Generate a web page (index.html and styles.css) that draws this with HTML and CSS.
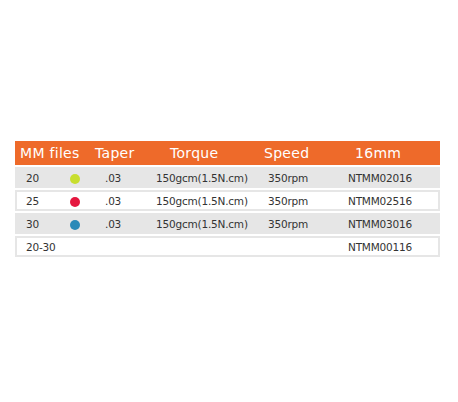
FILE: index.html
```html
<!DOCTYPE html>
<html lang="en">

<head>
    <meta charset="UTF-8">
    <meta name="viewport" content="width=device-width, initial-scale=1.0">
    <title>MM files</title>
    <link rel="stylesheet" href="styles.css">
</head>

<body>
    <main class="spec">
        <div class="spec-head">
            <span>MM files</span>
            <span>Taper</span>
            <span>Torque</span>
            <span>Speed</span>
            <span>16mm</span>
        </div>

        <div class="spec-row shaded">
            <span>20</span>
            <span><i class="dot lime"></i></span>
            <span>.03</span>
            <span>150gcm(1.5N.cm)</span>
            <span>350rpm</span>
            <span>NTMM02016</span>
        </div>
        <div class="spec-row">
            <span>25</span>
            <span><i class="dot red"></i></span>
            <span>.03</span>
            <span>150gcm(1.5N.cm)</span>
            <span>350rpm</span>
            <span>NTMM02516</span>
        </div>
        <div class="spec-row shaded">
            <span>30</span>
            <span><i class="dot blue"></i></span>
            <span>.03</span>
            <span>150gcm(1.5N.cm)</span>
            <span>350rpm</span>
            <span>NTMM03016</span>
        </div>
        <div class="spec-row">
            <span>20-30</span>
            <span></span>
            <span></span>
            <span></span>
            <span></span>
            <span>NTMM00116</span>
        </div>
    </main>
</body>

</html>
```

FILE: styles.css
```css
body {
    margin: 0;
    padding: 0;
    background: #ffffff;
    font-family: 'DejaVu Sans', sans-serif;
    color: #333333;
}

.spec {
    width: 425px;
    margin: 141px 0 0 15px;
    display: flex;
    flex-direction: column;
    gap: 2px;
}

.spec-head {
    display: grid;
    grid-template-columns: 75px 75px 94px 91px 1fr;
    align-items: center;
    height: 24px;
    padding-left: 5px;
    background: #ee6a2a;
    color: #ffffff;
    font-size: 14px;
    letter-spacing: 0.3px;
}

.spec-row {
    display: grid;
    grid-template-columns: 44px 35px 51px 112px 80px 1fr;
    align-items: center;
    box-sizing: border-box;
    height: 21px;
    padding-left: 9px;
    border: 2px solid #e6e6e6;
    font-size: 10.5px;
    letter-spacing: -0.2px;
}

.spec-row.shaded {
    background: #e6e6e6;
}

.dot {
    display: block;
    width: 10px;
    height: 10px;
    border-radius: 50%;
    margin-top: 2px;
}

.dot.lime {
    background: #c8de2e;
}

.dot.red {
    background: #e5173f;
}

.dot.blue {
    background: #2a8ab8;
}
```
